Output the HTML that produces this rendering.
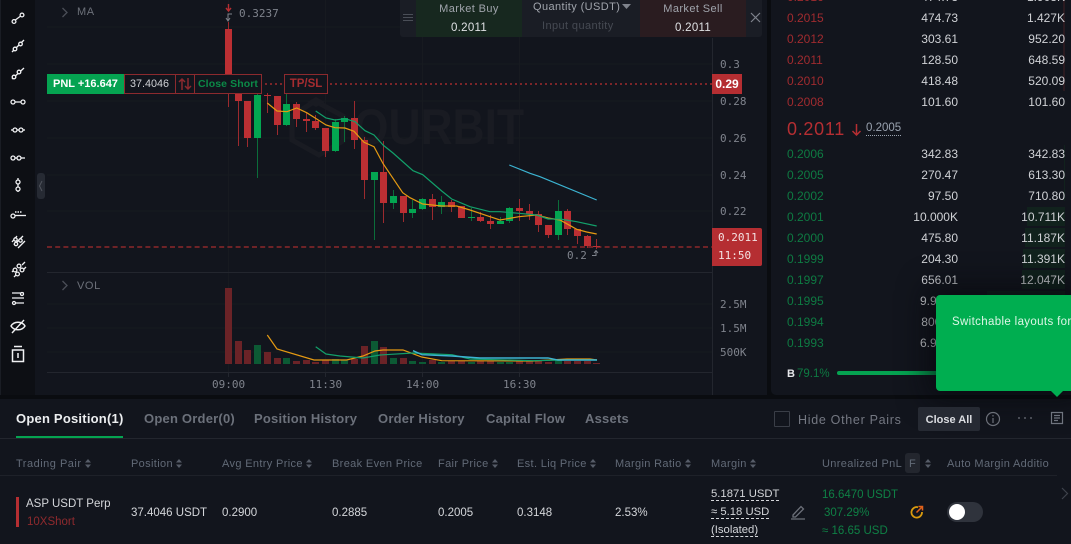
<!DOCTYPE html>
<html><head><meta charset="utf-8"><style>
html,body{margin:0;padding:0;background:#0a0c10}
#p{position:relative;width:1071px;height:544px;overflow:hidden;background:#0a0c10;font-family:"Liberation Sans",sans-serif}
.b{position:absolute}
.t{position:absolute;white-space:nowrap;line-height:14px;height:14px}
.r{text-align:right}
.c{text-align:center}
.m{font-family:"DejaVu Sans Mono","Liberation Mono",monospace;font-size:11px;color:#7f838c}
.ob{font-size:12px;color:#d0d2d6}
.rd{font-size:12px;color:#a02b2f;left:787px}
.gr{font-size:12px;color:#0e7a42;left:787px}
.tab{font-size:13px;font-weight:bold;color:#6c717b;letter-spacing:.22px;top:412px}
.h{font-size:11px;color:#626a77;letter-spacing:.35px;top:457px}
.h svg{margin-left:3px;vertical-align:-1px}
.v{font-size:11.5px;color:#d4d6da;top:506px}
.u{border-bottom:1px dashed #d4d6da;line-height:12px;height:12px;font-size:11.3px}
</style></head><body><div id="p">
<div class="b" style="left:0;top:0;width:35px;height:395px;background:#0d0f14"></div>
<div class="b" style="left:0;top:0;width:1px;height:395px;background:#1a1d24"></div>
<div class="b" style="left:35px;top:0;width:732px;height:395px;background:#12151d"></div>
<div class="b" style="left:771px;top:0;width:300px;height:395px;background:#12151d;border-radius:0 0 0 5px"></div>
<div class="b" style="left:0;top:399px;width:1071px;height:145px;background:#12151d"></div>

<svg class="b" style="left:0;top:0" width="767" height="395" fill="none">
<g stroke="#171a20" stroke-width="1">
<path d="M47 27H712M47 64H712M47 101H712M47 138H712M47 175H712M47 211H712"/>
<path d="M47 304H712M47 328H712M47 352H712"/>
<path d="M228.500 0V372M325.500 0V372M422.500 0V372M519.500 0V372"/>
</g>
<path d="M47 272.500H712M47 372.500H712M712.500 38V395" stroke="#23262e"/>
<path d="M228.500 372V377M325.500 372V377M422.500 372V377M519.500 372V377" stroke="#23262e"/>
<!-- watermark -->
<text x="354" y="144" font-family="Liberation Sans" font-weight="bold" font-size="50" fill="#191b22" textLength="170" lengthAdjust="spacingAndGlyphs">OURBIT</text>
<path d="M315 101l28 15v25l-24 14-27-15v-24z" stroke="#191b22" stroke-width="5"/>
<path d="M316 97l9 5-9 5-9-5z" fill="#191b22"/>
<!-- dashed / dotted lines -->
<path d="M47 247H712" stroke="#6e2327" stroke-width="2" stroke-dasharray="5 3.200"/>
<path d="M260 84H712" stroke="#7c2529" stroke-width="2" stroke-dasharray="2 3"/>
<!-- volume -->
<g fill="#6b2327">
<path d="M225 288h7v76h-7zM235 341h7v23h-7zM244 350h7v14h-7zM264 352h7v12h-7zM274 358h7v6h-7zM293 361h7v3h-7zM303 360h7v4h-7zM312 362h7v2h-7zM322 360h7v4h-7zM351 359h7v5h-7zM361 346h7v18h-7zM380 347h7v17h-7zM400 358h7v6h-7zM429 360h7v4h-7zM448 361h7v3h-7zM458 361h7v3h-7zM477 361h7v3h-7zM487 361h7v3h-7zM516 361h7v3h-7zM526 361h7v3h-7zM535 361h7v3h-7zM545 362h7v2h-7zM564 361h7v3h-7zM574 361h7v3h-7zM584 361h7v3h-7zM593 363h7v1h-7z"/>
</g>
<g fill="#0c5a34">
<path d="M254 345h7v19h-7zM283 358h7v6h-7zM332 359h7v5h-7zM341 360h7v4h-7zM371 341h7v23h-7zM390 358h7v6h-7zM409 361h7v3h-7zM419 362h7v2h-7zM438 362h7v2h-7zM468 362h7v2h-7zM497 362h7v2h-7zM506 362h7v2h-7zM555 360h7v4h-7z"/>
</g>
<path d="M267.300 335L277 349L314 360L346.700 360L363 356L375 351L383 350L403 350L421.700 357L441.700 360.700L533 361L567 359L590 359L597 360" stroke="#e59a12" stroke-width="1.200"/>
<path d="M315.700 346.700L326 354L340 356L363 358L380 355L413 353L452 354.700L470 359L533 360.700L567 360L597 360" stroke="#12a06a" stroke-width="1.200"/>
<path d="M413 350.700L422 354.700L452 356L480 358L548 358L558 360L597 360" stroke="#3cb4d2" stroke-width="1.400"/>
<!-- wicks -->
<g stroke="#9c2a2e" stroke-width="1">
<path d="M228.500 22V107M238.500 95V146M247.500 101V147M267.500 93V113M277.500 96V135M296.500 102V127M306.500 113V132M315.500 115V130M325.500 128V157M354.500 101V149M364.500 137V199M383.500 141V223M403.500 196V222M432.500 194V220M451.500 200V212M461.500 206V218M480.500 212V222M490.500 215V229M519.500 199V221M529.500 204V220M538.500 211V232M548.500 225V238M567.500 209V235M577.500 229V244M587.500 235V248M596.500 239V249"/>
</g>
<g stroke="#0b6d3a" stroke-width="1">
<path d="M257.500 84V178M286.500 94V126M335.500 119V152M344.500 116V142M374.500 172V240M393.500 190V209M412.500 200V218M422.500 198V210M441.500 196V214M471.500 208V221M500.500 217V224M509.500 207V223M558.500 200V240"/>
</g>
<!-- bodies -->
<path fill="#bc2f33" d="M225 29h7v53h-7zM235 90h7v11h-7zM244 101h7v37h-7zM264 95h7v1h-7zM274 96h7v29h-7zM293 104h7v15h-7zM303 119h7v2h-7zM312 121h7v7h-7zM322 128h7v23h-7zM351 118h7v22h-7zM361 140h7v40h-7zM380 172h7v31h-7zM400 196h7v17h-7zM429 199h7v8h-7zM448 202h7v5h-7zM458 206h7v12h-7zM477 217h7v4h-7zM487 221h7v3h-7zM516 208h7v3h-7zM526 211h7v3h-7zM535 214h7v11h-7zM545 225h7v10h-7zM564 211h7v18h-7zM574 229h7v7h-7zM584 236h7v10h-7zM593 246h7v1h-7z"/>
<path fill="#03a651" d="M254 95h7v43h-7zM283 104h7v21h-7zM332 122h7v29h-7zM341 118h7v4h-7zM371 172h7v8h-7zM390 196h7v7h-7zM409 209h7v4h-7zM419 199h7v10h-7zM438 202h7v5h-7zM468 217h7v1h-7zM497 221h7v3h-7zM506 208h7v13h-7zM555 211h7v24h-7z"/>
<!-- MAs -->
<path d="M267.300 103L277 111L287 111.700L296.700 108L306.700 112.700L316.700 119L326 125L335 127.700L345 128L354 131.300L364 142.300L374 146.700L383.300 164L393 178.300L402.700 192.700L410 197.700L422.700 204L441.700 206L456.700 206L470 210L490 216.700L500 220L519 216.700L536.700 215L548 218L560 220L576.700 229.300L586.700 232L596.700 234" stroke="#e59a12" stroke-width="1.200"/>
<path d="M315.700 111L326 118L335 120L345 118.700L355 121.700L365 130.700L374 135L383 145L393 153L413 170.700L422.700 174.700L441.700 191L451.700 199L470 206.700L490 211.700L500 211.700L519 213.300L536.700 215L548 219L560 219L576.700 221.700L596.700 226" stroke="#12a06a" stroke-width="1.200"/>
<path d="M509.300 165L530 173.300L540 176.700L596.700 200" stroke="#3cb4d2" stroke-width="1.200"/>
<!-- chevrons -->
<path d="M62.500 8L67 12.500L62.500 17M62.500 281L67 285.500L62.500 290" stroke="#4a4e57" stroke-width="1.300"/>
<!-- high/low markers -->
<path d="M228.500 4V10M226 8L228.500 11L231 8" stroke="#b52e32" stroke-width="1.400"/>
<path d="M232 14H228V20M226 18L228 21L230 18" stroke="#7f838c" stroke-width="1"/>
<path d="M592 255.500H596V251M594 253L596 250.500L598 253" stroke="#7f838c" stroke-width="1"/>
<!-- toolbar icons -->
<g stroke="#f0f1f3" stroke-width="1.300" fill="#0d0f14">
<path d="M14 21L22 15"/><circle cx="14" cy="21.500" r="1.900"/><circle cx="22" cy="15" r="1.900"/>
<path d="M12 52L24 40"/><circle cx="15" cy="49" r="1.800"/><circle cx="20.500" cy="44" r="1.800"/>
<path d="M12 79L24 68"/><circle cx="14" cy="77" r="1.800"/><circle cx="19" cy="72" r="1.800"/>
<path d="M13 102H23"/><circle cx="13" cy="102" r="2"/><circle cx="23" cy="102" r="2"/>
<path d="M11 130H25"/><circle cx="15" cy="130" r="2"/><circle cx="21" cy="130" r="2"/>
<path d="M12 158H25"/><circle cx="13" cy="158" r="2"/><circle cx="19" cy="158" r="2"/>
<path d="M18 178V192"/><circle cx="18" cy="182" r="2"/><circle cx="18" cy="189" r="2"/>
<path d="M13 215.500H26"/><circle cx="13" cy="216" r="2"/>
<path d="M12 242L17 236M18 248L25 241M14 245L23 236"/><circle cx="15.500" cy="239.500" r="1.700"/><circle cx="20.500" cy="240.500" r="1.700"/><circle cx="16" cy="244" r="1.700"/>
<path d="M12 272L15 269M22 265L25 262M14 277L17 274M23 270L26 267" /><circle cx="15" cy="270" r="1.900"/><circle cx="19" cy="266" r="1.900"/><circle cx="22" cy="270" r="1.900"/><circle cx="17.500" cy="274" r="1.900"/>
<path d="M12 293H24M12 298H24M12 303H24"/><circle cx="22" cy="294" r="1.500"/><circle cx="14" cy="303" r="1.500"/>
<path d="M11 326C14 321 22 321 25 326C22 331 14 331 11 326Z M24 320L12 333" fill="none" stroke-width="1.400"/>
<path d="M12.500 350H23.500V361.500H12.500ZM14 346.500H22M18 353V358" fill="none" stroke-width="1.500"/>
</g>
<path d="M15 212h7" stroke="#f0f1f3" stroke-width="1.600" stroke-dasharray="1.500 1"/>
</svg>

<div class="b" style="left:37px;top:173px;width:8px;height:26px;background:#262a33;border-radius:3px"></div>
<svg class="b" style="left:38px;top:180px" width="6" height="12" fill="none"><path d="M4 1L1.500 6L4 11" stroke="#50545d"/></svg>

<div class="t m" style="left:239px;top:7px">0.3237</div>
<div class="t" style="left:77px;top:5px;font-size:11px;color:#6c7079;letter-spacing:.6px">MA</div>
<div class="t" style="left:77px;top:279px;font-size:11px;color:#6c7079;letter-spacing:.6px">VOL</div>
<div class="t m" style="left:567px;top:249px">0.2</div>
<div class="t m" style="left:720px;top:58px">0.3</div>
<div class="t m" style="left:720px;top:95px">0.28</div>
<div class="t m" style="left:720px;top:132px">0.26</div>
<div class="t m" style="left:720px;top:169px">0.24</div>
<div class="t m" style="left:720px;top:205px">0.22</div>
<div class="t m" style="left:720px;top:298px">2.5M</div>
<div class="t m" style="left:720px;top:322px">1.5M</div>
<div class="t m" style="left:720px;top:346px">500K</div>
<div class="t m" style="left:212px;top:378px">09:00</div>
<div class="t m" style="left:309px;top:378px">11:30</div>
<div class="t m" style="left:406px;top:378px">14:00</div>
<div class="t m" style="left:503px;top:378px">16:30</div>

<div class="b" style="left:712px;top:74px;width:30px;height:20px;background:#b52e32"></div>
<div class="t" style="left:712px;top:77px;width:30px;text-align:center;font:bold 12px/14px 'Liberation Sans',sans-serif;color:#fff">0.29</div>
<div class="b" style="left:712px;top:228px;width:50px;height:38px;background:#b52e32;border-radius:0 2px 2px 0"></div>
<div class="t m" style="left:718px;top:231px;color:#f3e2e2">0.2011</div>
<div class="t m" style="left:718px;top:249px;color:#f3e2e2">11:50</div>

<!-- position labels -->
<div class="b" style="left:47px;top:74px;width:77px;height:20px;background:#05a351"></div>
<div class="t" style="left:53px;top:77px;font-size:11px;font-weight:bold;color:#fff">PNL +16.647</div>
<div class="b" style="left:124px;top:74px;width:136px;height:18px;border:1px solid #8c2a2e;background:#12151d"></div>
<div class="b" style="left:175px;top:74px;width:1px;height:20px;background:#8c2a2e"></div>
<div class="b" style="left:194px;top:74px;width:1px;height:20px;background:#8c2a2e"></div>
<div class="t" style="left:130px;top:77px;font-size:10.800px;color:#cfd1d5">37.4046</div>
<svg class="b" style="left:177px;top:77px" width="16" height="14" fill="none" stroke="#8c2a2e" stroke-width="1.500"><path d="M5 13V2M2 5L5 2L8 5M11 1V12M8 9L11 12L14 9"/></svg>
<div class="t" style="left:198px;top:77px;font-size:10.500px;font-weight:bold;color:#0b8a47;letter-spacing:.1px">Close Short</div>
<div class="b" style="left:284px;top:74px;width:42px;height:18px;border:1px solid #8c2a2e;background:#12151d"></div>
<div class="t c" style="left:284px;top:77px;width:44px;font-size:11.500px;font-weight:bold;color:#a52c30">TP/SL</div>

<!-- trade strip -->
<div class="b" style="left:400px;top:0;width:362px;height:37px;background:#1a1d25;border-radius:0 0 3px 3px"></div>
<div class="b" style="left:416px;top:0;width:106px;height:37px;background:#17281f"></div>
<div class="b" style="left:640px;top:0;width:106px;height:37px;background:#2a1c20"></div>
<svg class="b" style="left:403px;top:13px" width="10" height="10" stroke="#4a4e57"><path d="M0 1.500H10M0 4.500H10M0 7.500H10"/></svg>
<svg class="b" style="left:750px;top:12px" width="11" height="11" stroke="#7f838c" stroke-width="1.200"><path d="M1 1L10 10M10 1L1 10"/></svg>
<div class="t c" style="left:416px;top:2px;width:106px;font-size:11px;color:#a0a4ac;letter-spacing:.4px">Market Buy</div>
<div class="t c" style="left:416px;top:21px;width:106px;font-size:11.500px;color:#dfe1e4;letter-spacing:.3px">0.2011</div>
<div class="t" style="left:533px;top:0;font-size:11px;color:#a0a4ac;letter-spacing:.4px">Quantity (USDT)</div>
<svg class="b" style="left:622px;top:4px" width="10" height="6"><path d="M0 0H9L4.500 5Z" fill="#7f838c"/></svg>
<div class="t" style="left:542px;top:19px;font-size:11px;color:#464a53;letter-spacing:.4px">Input quantity</div>
<div class="t c" style="left:640px;top:2px;width:106px;font-size:11px;color:#a0a4ac;letter-spacing:.4px">Market Sell</div>
<div class="t c" style="left:640px;top:21px;width:106px;font-size:11.500px;color:#dfe1e4;letter-spacing:.3px">0.2011</div>

<!-- order book -->
<div class="b" style="left:1027px;top:207px;width:38px;height:19px;background:#11221d"></div>
<div class="b" style="left:1025px;top:228px;width:40px;height:19px;background:#11221d"></div>
<div class="b" style="left:1023px;top:249px;width:42px;height:19px;background:#11221d"></div>
<div class="b" style="left:1022px;top:270px;width:43px;height:19px;background:#11221d"></div>
<div class="b" style="left:987px;top:291px;width:78px;height:19px;background:#11221d"></div>
<div class="b" style="left:1064px;top:145px;width:1px;height:56px;background:#11221d"></div>
<div class="b" style="left:1063px;top:0;width:2px;height:91px;background:#2a1a20"></div>

<div class="t rd" style="top:-10px">0.2016</div><div class="t ob r" style="left:858px;width:100px;top:-10px">474.73</div><div class="t ob r" style="left:965px;width:100px;top:-10px">1.903K</div>
<div class="t rd" style="top:11px">0.2015</div><div class="t ob r" style="left:858px;width:100px;top:11px">474.73</div><div class="t ob r" style="left:965px;width:100px;top:11px">1.427K</div>
<div class="t rd" style="top:32px">0.2012</div><div class="t ob r" style="left:858px;width:100px;top:32px">303.61</div><div class="t ob r" style="left:965px;width:100px;top:32px">952.20</div>
<div class="t rd" style="top:53px">0.2011</div><div class="t ob r" style="left:858px;width:100px;top:53px">128.50</div><div class="t ob r" style="left:965px;width:100px;top:53px">648.59</div>
<div class="t rd" style="top:74px">0.2010</div><div class="t ob r" style="left:858px;width:100px;top:74px">418.48</div><div class="t ob r" style="left:965px;width:100px;top:74px">520.09</div>
<div class="t rd" style="top:95px">0.2008</div><div class="t ob r" style="left:858px;width:100px;top:95px">101.60</div><div class="t ob r" style="left:965px;width:100px;top:95px">101.60</div>
<div class="t" style="left:787px;top:121px;font-size:18px;line-height:16px;height:16px;color:#b52e32;letter-spacing:.7px">0.2011</div>
<svg class="b" style="left:851px;top:123px" width="11" height="13" fill="none" stroke="#b52e32" stroke-width="1.500"><path d="M5.500 1V12M1.500 8L5.500 12L9.500 8"/></svg>
<div class="t" style="left:866px;top:121px;font-size:11.500px;color:#9aa3b0;border-bottom:1px dotted #9aa3b0">0.2005</div>
<div class="t gr" style="top:147px">0.2006</div><div class="t ob r" style="left:858px;width:100px;top:147px">342.83</div><div class="t ob r" style="left:965px;width:100px;top:147px">342.83</div>
<div class="t gr" style="top:168px">0.2005</div><div class="t ob r" style="left:858px;width:100px;top:168px">270.47</div><div class="t ob r" style="left:965px;width:100px;top:168px">613.30</div>
<div class="t gr" style="top:189px">0.2002</div><div class="t ob r" style="left:858px;width:100px;top:189px">97.50</div><div class="t ob r" style="left:965px;width:100px;top:189px">710.80</div>
<div class="t gr" style="top:210px">0.2001</div><div class="t ob r" style="left:858px;width:100px;top:210px">10.000K</div><div class="t ob r" style="left:965px;width:100px;top:210px">10.711K</div>
<div class="t gr" style="top:231px">0.2000</div><div class="t ob r" style="left:858px;width:100px;top:231px">475.80</div><div class="t ob r" style="left:965px;width:100px;top:231px">11.187K</div>
<div class="t gr" style="top:252px">0.1999</div><div class="t ob r" style="left:858px;width:100px;top:252px">204.30</div><div class="t ob r" style="left:965px;width:100px;top:252px">11.391K</div>
<div class="t gr" style="top:273px">0.1997</div><div class="t ob r" style="left:858px;width:100px;top:273px">656.01</div><div class="t ob r" style="left:965px;width:100px;top:273px">12.047K</div>
<div class="t gr" style="top:294px">0.1995</div><div class="t ob r" style="left:858px;width:100px;top:294px">9.956K</div>
<div class="t gr" style="top:315px">0.1994</div><div class="t ob r" style="left:858px;width:100px;top:315px">800.50</div>
<div class="t gr" style="top:336px">0.1993</div><div class="t ob r" style="left:858px;width:100px;top:336px">6.900K</div>
<div class="t" style="left:787px;top:367px;font-size:11px;font-weight:bold;color:#e6e7ea">B</div>
<div class="t" style="left:797px;top:367px;font-size:11.500px;color:#0e7a42">79.1%</div>
<div class="b" style="left:837px;top:371px;width:110px;height:4px;border-radius:2px;background:#05a351"></div>

<!-- tooltip -->
<div class="b" style="left:936px;top:295px;width:140px;height:96px;background:#00ae50;border-radius:4px;box-shadow:0 0 28px 10px rgba(6,8,12,.65)"></div>
<svg class="b" style="left:1050px;top:390px" width="14" height="8"><path d="M0 0H14L7 7Z" fill="#00ae50"/></svg>
<div class="t" style="left:952px;top:315px;font-size:11.500px;color:#dcf6e6;letter-spacing:.35px">Switchable layouts for</div>

<!-- bottom tabs -->
<div class="t tab" style="left:16px;color:#eceef0">Open Position(1)</div>
<div class="b" style="left:16px;top:436px;width:107px;height:2px;background:#05a351"></div>
<div class="t tab" style="left:144px">Open Order(0)</div>
<div class="t tab" style="left:254px">Position History</div>
<div class="t tab" style="left:378px">Order History</div>
<div class="t tab" style="left:486px">Capital Flow</div>
<div class="t tab" style="left:585px">Assets</div>
<div class="b" style="left:0;top:438px;width:1071px;height:1px;background:#23262e"></div>
<div class="b" style="left:774px;top:411px;width:14px;height:14px;border:1px solid #3a3e47;border-radius:1px"></div>
<div class="t" style="left:798px;top:413px;font-size:12.500px;color:#747882;letter-spacing:.7px">Hide Other Pairs</div>
<div class="b" style="left:918px;top:407px;width:62px;height:24px;background:#262a33;border-radius:2px"></div>
<div class="t c" style="left:918px;top:413px;width:62px;font-size:11px;font-weight:bold;color:#dcdee2">Close All</div>
<svg class="b" style="left:985px;top:411px" width="16" height="16" fill="none" stroke="#6c7079" stroke-width="1.200"><circle cx="8" cy="8" r="6.500"/><path d="M8 7V12M8 4V5.500"/></svg>
<svg class="b" style="left:1017px;top:416px" width="16" height="4" fill="#5a5e67"><circle cx="2" cy="2" r="1"/><circle cx="8" cy="2" r="1"/><circle cx="14" cy="2" r="1"/></svg>
<svg class="b" style="left:1050px;top:411px" width="14" height="14" fill="none" stroke="#70757f" stroke-width="1.200"><path d="M1.500 1.500H12.500V12.500H1.500ZM4 4.500H10M4 7H10M4 9.500H8"/></svg>

<!-- table header -->
<div class="t h" style="left:16px;letter-spacing:.5px">Trading Pair<svg width="6" height="9"><path d="M3 0L6 3.500H0ZM3 9L0 5.500H6Z" fill="#565c68"/></svg></div>
<div class="t h" style="left:131px">Position<svg width="6" height="9"><path d="M3 0L6 3.500H0ZM3 9L0 5.500H6Z" fill="#565c68"/></svg></div>
<div class="t h" style="left:222px">Avg Entry Price<svg width="6" height="9"><path d="M3 0L6 3.500H0ZM3 9L0 5.500H6Z" fill="#565c68"/></svg></div>
<div class="t h" style="left:332px">Break Even Price</div>
<div class="t h" style="left:438px">Fair Price<svg width="6" height="9"><path d="M3 0L6 3.500H0ZM3 9L0 5.500H6Z" fill="#565c68"/></svg></div>
<div class="t h" style="left:517px">Est. Liq Price<svg width="6" height="9"><path d="M3 0L6 3.500H0ZM3 9L0 5.500H6Z" fill="#565c68"/></svg></div>
<div class="t h" style="left:615px">Margin Ratio<svg width="6" height="9"><path d="M3 0L6 3.500H0ZM3 9L0 5.500H6Z" fill="#565c68"/></svg></div>
<div class="t h" style="left:711px">Margin<svg width="6" height="9"><path d="M3 0L6 3.500H0ZM3 9L0 5.500H6Z" fill="#565c68"/></svg></div>
<div class="t h" style="left:822px">Unrealized PnL</div>
<div class="b" style="left:905px;top:453px;width:15px;height:20px;background:#23262e;border-radius:3px"></div>
<div class="t h c" style="left:905px;width:15px">F</div>
<svg class="b" style="left:925px;top:459px" width="6" height="9"><path d="M3 0L6 3.500H0ZM3 9L0 5.500H6Z" fill="#565c68"/></svg>
<div class="t h" style="left:947px;width:102px;overflow:hidden">Auto Margin Addition</div>
<div class="b" style="left:0;top:475px;width:1057px;height:1px;background:#1e2129"></div>

<!-- row -->
<div class="b" style="left:16px;top:497px;width:3px;height:30px;background:#b52e32"></div>
<div class="t" style="left:26px;top:497px;font-size:11.500px;color:#d4d6da">ASP USDT Perp</div>
<div class="t" style="left:27px;top:515px;font-size:11.500px;color:#8f2a2e">10XShort</div>
<div class="t v" style="left:131px">37.4046 USDT</div>
<div class="t v" style="left:222px">0.2900</div>
<div class="t v" style="left:332px">0.2885</div>
<div class="t v" style="left:438px">0.2005</div>
<div class="t v" style="left:517px">0.3148</div>
<div class="t v" style="left:615px">2.53%</div>
<div class="t v u" style="left:711px;top:488px">5.1871 USDT</div>
<div class="t v u" style="left:711px;top:506px">≈ 5.18 USD</div>
<div class="t v u" style="left:711px;top:524px">(Isolated)</div>
<svg class="b" style="left:790px;top:504px" width="16" height="16" fill="none" stroke="#6c7079" stroke-width="1.300"><path d="M3 11L11 2.500L13.500 5L5.500 13H3ZM1 15H15"/></svg>
<div class="t" style="left:822px;top:488px;font-size:11.500px;color:#0f8045">16.6470 USDT</div>
<div class="t" style="left:824px;top:506px;font-size:11.500px;color:#0f8045">307.29%</div>
<div class="t" style="left:822px;top:524px;font-size:11.500px;color:#0f8045">≈ 16.65 USD</div>
<svg class="b" style="left:909px;top:504px" width="16" height="16" fill="none" stroke-width="1.800"><path d="M9 3.200A5.300 5.300 0 1 0 13 8" stroke="#d99a0e"/><path d="M7.500 8.500L13 3M9.500 2.500H13.500V6.500" stroke="#e2621b" stroke-width="1.500"/></svg>
<div class="b" style="left:947px;top:502px;width:36px;height:20px;border-radius:10px;background:#2f333c"></div>
<div class="b" style="left:949px;top:504px;width:16px;height:16px;border-radius:50%;background:#fff"></div>
<svg class="b" style="left:1060px;top:487px" width="10" height="13" fill="none" stroke="#3f434c" stroke-width="1.200"><path d="M2 1L7.500 6.500L2 12"/></svg>
</div></body></html>
